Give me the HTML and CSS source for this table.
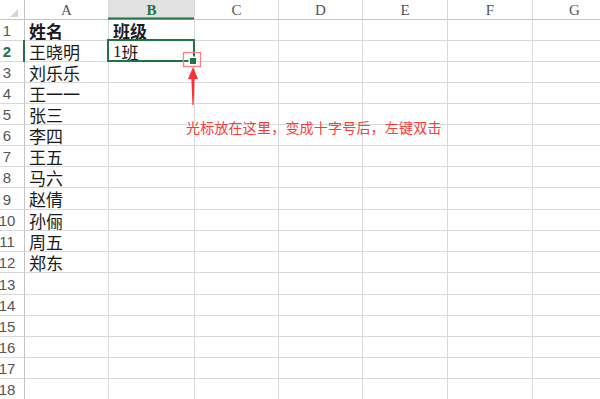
FILE: index.html
```html
<!DOCTYPE html>
<html lang="zh">
<head>
<meta charset="utf-8">
<link rel="stylesheet" href="styles.css">
</head>
<body>
<div class="wrap">
  <div class="sheet">
    <div class="corner"><svg class="tri" width="8" height="8" viewBox="0 0 8 8"><polygon points="8,0 8,8 0,8" fill="#d6d6d6"/></svg></div>
    <div class="ch">A</div>
    <div class="ch sel">B</div>
    <div class="ch">C</div>
    <div class="ch">D</div>
    <div class="ch">E</div>
    <div class="ch">F</div>
    <div class="ch">G</div>

    <div class="rh">1</div><div class="c b">姓名</div><div class="c b">班级</div><div class="c"></div><div class="c"></div><div class="c"></div><div class="c"></div><div class="c"></div>
    <div class="rh rsel">2</div><div class="c">王晓明</div><div class="c"><span class="num">1</span>班</div><div class="c"></div><div class="c"></div><div class="c"></div><div class="c"></div><div class="c"></div>
    <div class="rh">3</div><div class="c">刘乐乐</div><div class="c"></div><div class="c"></div><div class="c"></div><div class="c"></div><div class="c"></div><div class="c"></div>
    <div class="rh">4</div><div class="c">王一一</div><div class="c"></div><div class="c"></div><div class="c"></div><div class="c"></div><div class="c"></div><div class="c"></div>
    <div class="rh">5</div><div class="c">张三</div><div class="c"></div><div class="c"></div><div class="c"></div><div class="c"></div><div class="c"></div><div class="c"></div>
    <div class="rh">6</div><div class="c">李四</div><div class="c"></div><div class="c"></div><div class="c"></div><div class="c"></div><div class="c"></div><div class="c"></div>
    <div class="rh">7</div><div class="c">王五</div><div class="c"></div><div class="c"></div><div class="c"></div><div class="c"></div><div class="c"></div><div class="c"></div>
    <div class="rh">8</div><div class="c">马六</div><div class="c"></div><div class="c"></div><div class="c"></div><div class="c"></div><div class="c"></div><div class="c"></div>
    <div class="rh">9</div><div class="c">赵倩</div><div class="c"></div><div class="c"></div><div class="c"></div><div class="c"></div><div class="c"></div><div class="c"></div>
    <div class="rh">10</div><div class="c">孙俪</div><div class="c"></div><div class="c"></div><div class="c"></div><div class="c"></div><div class="c"></div><div class="c"></div>
    <div class="rh">11</div><div class="c">周五</div><div class="c"></div><div class="c"></div><div class="c"></div><div class="c"></div><div class="c"></div><div class="c"></div>
    <div class="rh">12</div><div class="c">郑东</div><div class="c"></div><div class="c"></div><div class="c"></div><div class="c"></div><div class="c"></div><div class="c"></div>
    <div class="rh">13</div><div class="c"></div><div class="c"></div><div class="c"></div><div class="c"></div><div class="c"></div><div class="c"></div><div class="c"></div>
    <div class="rh">14</div><div class="c"></div><div class="c"></div><div class="c"></div><div class="c"></div><div class="c"></div><div class="c"></div><div class="c"></div>
    <div class="rh">15</div><div class="c"></div><div class="c"></div><div class="c"></div><div class="c"></div><div class="c"></div><div class="c"></div><div class="c"></div>
    <div class="rh">16</div><div class="c"></div><div class="c"></div><div class="c"></div><div class="c"></div><div class="c"></div><div class="c"></div><div class="c"></div>
    <div class="rh">17</div><div class="c"></div><div class="c"></div><div class="c"></div><div class="c"></div><div class="c"></div><div class="c"></div><div class="c"></div>
    <div class="rh">18</div><div class="c"></div><div class="c"></div><div class="c"></div><div class="c"></div><div class="c"></div><div class="c"></div><div class="c"></div>
  </div>

  <svg class="overlay" width="600" height="399" viewBox="0 0 600 399">
    <line x1="108" y1="18.5" x2="194" y2="18.5" stroke="#217346" stroke-width="2"/>
    <line x1="24" y1="40" x2="24" y2="62" stroke="#217346" stroke-width="2"/>
    <rect x="108" y="40" width="86" height="21" fill="none" stroke="#217346" stroke-width="2"/>
    <rect x="188.5" y="56.5" width="8" height="8" fill="#ffffff"/>
    <rect x="190" y="58" width="6" height="6" fill="#217346"/>
    <rect x="183.5" y="52.5" width="17" height="14" fill="none" stroke="#ff8080" stroke-width="1.3"/>
    <polygon points="193,67 198,79 194.6,79 193.6,105 192.4,105 191.4,79 188,79" fill="#ff3030"/>
  </svg>
  <div class="note">光标放在这里，变成十字号后，左键双击</div>
</div>
</body>
</html>
```
FILE: styles.css
```css
html, body {
  margin: 0;
  padding: 0;
  background: #ffffff;
  overflow: hidden;
}

.wrap {
  position: relative;
  width: 600px;
  height: 399px;
  overflow: hidden;
}

.sheet {
  display: grid;
  grid-template-columns: 25px 84px 86px 84px 84px 85px 85px 84px;
  grid-template-rows: 20px repeat(8, 21px) 22px repeat(3, 21px) 22px repeat(5, 21px);
  width: 617px;
}

.sheet > div {
  box-sizing: border-box;
  border-right: 1px solid #d9d9d9;
  border-bottom: 1px solid #d9d9d9;
  white-space: nowrap;
}

.corner {
  position: relative;
  border-right-color: #c4c4c4 !important;
  border-bottom-color: #c4c4c4 !important;
}

.tri {
  position: absolute;
  left: 10px;
  top: 9px;
}

.ch {
  display: flex;
  align-items: center;
  justify-content: center;
  font-family: "Liberation Serif", "DejaVu Serif", serif;
  font-size: 15px;
  line-height: 1;
  color: #555555;
  border-bottom-color: #c4c4c4 !important;
  padding-top: 1px;
}

.ch.sel {
  background: #e1e1e1;
  color: #217346;
  font-weight: bold;
}

.rh {
  display: flex;
  align-items: center;
  justify-content: center;
  padding-right: 10px;
  font-family: "Liberation Sans", "DejaVu Sans", sans-serif;
  font-size: 15px;
  line-height: 1;
  color: #555555;
  border-right-color: #c4c4c4 !important;
  padding-top: 1px;
}

.rh.rsel {
  color: #217346;
  font-weight: bold;
}

.c {
  display: flex;
  align-items: center;
  padding-left: 4px;
  font-family: "Noto Sans CJK SC", "Noto Sans", sans-serif;
  font-size: 17px;
  color: #1a1a1a;
  line-height: 1;
}

.c.b {
  font-weight: bold;
}

.num {
  font-family: "Liberation Serif", serif;
}

.overlay {
  position: absolute;
  left: 0;
  top: 0;
}

.note {
  position: absolute;
  left: 186px;
  top: 118px;
  font-family: "Noto Sans CJK SC", sans-serif;
  font-size: 14px;
  line-height: 18px;
  letter-spacing: 0.2px;
  color: #ff3838;
  white-space: nowrap;
}
```
